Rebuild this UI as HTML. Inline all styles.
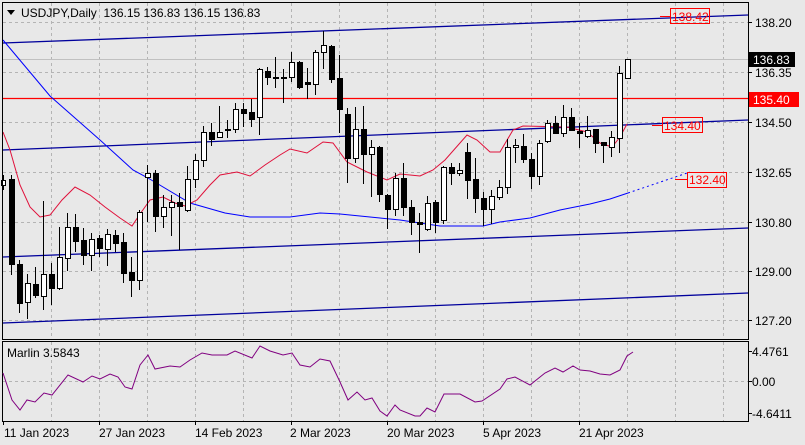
<!DOCTYPE html>
<html><head><meta charset="utf-8"><style>
html,body{margin:0;padding:0;background:#e8e8e8;}
svg{display:block;font-family:"Liberation Sans",sans-serif;}
</style></head><body>
<svg width="805" height="445" viewBox="0 0 805 445" xmlns="http://www.w3.org/2000/svg">
<rect width="805" height="445" fill="#e8e8e8"/>
<g stroke="#b4b4b4" stroke-width="1" stroke-dasharray="3,3" fill="none">
<path d="M3 22.5H748M3 72.5H748M3 122.5H748M3 172.5H748M3 222.5H748M3 271.5H748M3 320.5H748"/>
<path d="M51.5 3V339M99.5 3V339M147.5 3V339M195.5 3V339M243.5 3V339M291.5 3V339M339.5 3V339M387.5 3V339M435.5 3V339M483.5 3V339M531.5 3V339M579.5 3V339M627.5 3V339M675.5 3V339M723.5 3V339"/>
<path d="M51.5 342V421M99.5 342V421M147.5 342V421M195.5 342V421M243.5 342V421M291.5 342V421M339.5 342V421M387.5 342V421M435.5 342V421M483.5 342V421M531.5 342V421M579.5 342V421M627.5 342V421M675.5 342V421M723.5 342V421M3 381.5H748"/>
</g>
<path d="M3 59.5H748" stroke="#c0c0c0"/>
<g stroke="#00009c" stroke-width="1.3" fill="none">
<path d="M3 43L748 15"/>
<path d="M3 150L748 120"/>
<path d="M3 257L748 228"/>
<path d="M3 323L748 293"/>
</g>
<path d="M3 98.5H748" stroke="#ff0000" stroke-width="1.3"/>
<polyline fill="none" stroke="#0000ff" stroke-width="1" points="3,40 50,96 100,140 133,170 148,178 190,203 225,213 250,217 290,217 320,213 340,214 380,218 400,220 420,223 440,226 483,226 500,222 530,218 560,210 590,204 610,199 628,193"/>
<path d="M628 193L690 172" stroke="#0000ff" stroke-dasharray="2,3" fill="none"/>
<polyline fill="none" stroke="#e0103a" stroke-width="1" points="3,132 10,150 20,185 30,207 40,217 50,215 62,200 75,187 90,195 105,207 120,218 132,226 140,214 150,200 163,197 175,203 185,206 197,200 210,185 220,175 237,172 250,176 265,165 280,155 290,149 307,153 323,142 333,143 347,162 367,172 387,180 400,174 420,176 433,170 445,160 467,135 477,140 490,152 500,152 513,130 523,126 567,127 587,132 600,143 612,147 620,137 627,124"/>
<path stroke="#000" stroke-width="1" fill="none" d="M3.5 175V190M11.5 175V275M19.5 260V313M27.5 274V319M35.5 267V298M43.5 201V310M51.5 263V305M59.5 227V290M67.5 213V271M75.5 214V252M83.5 228V265M91.5 233V271M99.5 235V257M107.5 229V266M115.5 230V252M123.5 233V283M131.5 257V297M139.5 210V290M147.5 165V222M155.5 170V232M163.5 195V228M171.5 195V236M179.5 193V250M187.5 166V212M195.5 154V188M203.5 126V167M211.5 123V146M219.5 106V137M227.5 120V138M235.5 103V133M243.5 103V127M251.5 99V127M259.5 68V135M267.5 67V85M275.5 57V88M283.5 69V103M291.5 52V82M299.5 61V89M307.5 68V99M315.5 50V95M323.5 31V69M331.5 45V83M339.5 55V133M347.5 108V183M355.5 107V163M363.5 106V184M371.5 140V197M379.5 146V202M387.5 194V229M395.5 173V216M403.5 163V216M411.5 200V235M419.5 213V253M427.5 196V231M435.5 200V233M443.5 166V224M451.5 163V185M459.5 163V176M467.5 143V199M475.5 158V213M483.5 192V226M491.5 190V224M499.5 180V200M507.5 139V194M515.5 139V163M523.5 134V163M531.5 153V189M539.5 140V185M547.5 120V143M555.5 116V133M563.5 105V137M571.5 108V131M579.5 123V148M587.5 116V138M595.5 129V153M603.5 142V163M611.5 131V157M619.5 66V153M627.5 59V78"/>
<g stroke="#000" stroke-width="1">
<g fill="#fff">
<rect x="1.5" y="180.5" width="4" height="5"/>
<rect x="25.5" y="283.5" width="5" height="19"/>
<rect x="41.5" y="274.5" width="5" height="22"/>
<rect x="57.5" y="257.5" width="5" height="31"/>
<rect x="65.5" y="227.5" width="5" height="31"/>
<rect x="89.5" y="239.5" width="5" height="16"/>
<rect x="105.5" y="234.5" width="5" height="15"/>
<rect x="137.5" y="212.5" width="5" height="68"/>
<rect x="145.5" y="173.5" width="5" height="4"/>
<rect x="161.5" y="207.5" width="5" height="9"/>
<rect x="169.5" y="202.5" width="5" height="5"/>
<rect x="185.5" y="179.5" width="5" height="31"/>
<rect x="193.5" y="160.5" width="5" height="19"/>
<rect x="201.5" y="132.5" width="5" height="28"/>
<rect x="217.5" y="132.5" width="5" height="5"/>
<rect x="233.5" y="109.5" width="5" height="20"/>
<rect x="257.5" y="69.5" width="5" height="48"/>
<rect x="289.5" y="62.5" width="5" height="15"/>
<rect x="313.5" y="52.5" width="5" height="32"/>
<rect x="321.5" y="45.5" width="5" height="7"/>
<rect x="353.5" y="129.5" width="5" height="29"/>
<rect x="369.5" y="147.5" width="5" height="7"/>
<rect x="393.5" y="178.5" width="5" height="31"/>
<rect x="425.5" y="203.5" width="5" height="26"/>
<rect x="441.5" y="167.5" width="5" height="53"/>
<rect x="457.5" y="170.5" width="5" height="3"/>
<rect x="489.5" y="196.5" width="5" height="13"/>
<rect x="497.5" y="187.5" width="5" height="10"/>
<rect x="505.5" y="147.5" width="5" height="40"/>
<rect x="513.5" y="145.5" width="5" height="2"/>
<rect x="537.5" y="143.5" width="5" height="33"/>
<rect x="545.5" y="123.5" width="5" height="18"/>
<rect x="561.5" y="117.5" width="5" height="16"/>
<rect x="585.5" y="130.5" width="5" height="6"/>
<rect x="609.5" y="137.5" width="5" height="10"/>
<rect x="617.5" y="73.5" width="5" height="65"/>
<rect x="625.5" y="59.5" width="5" height="19"/>
</g>
<g fill="#000">
<rect x="9.5" y="179.5" width="5" height="85"/>
<rect x="17.5" y="264.5" width="5" height="39"/>
<rect x="33.5" y="284.5" width="5" height="11"/>
<rect x="49.5" y="274.5" width="5" height="14"/>
<rect x="73.5" y="227.5" width="5" height="14"/>
<rect x="81.5" y="240.5" width="5" height="15"/>
<rect x="97.5" y="238.5" width="5" height="10"/>
<rect x="113.5" y="235.5" width="5" height="8"/>
<rect x="121.5" y="242.5" width="5" height="31"/>
<rect x="129.5" y="272.5" width="5" height="8"/>
<rect x="153.5" y="173.5" width="5" height="43"/>
<rect x="177.5" y="202.5" width="5" height="4"/>
<rect x="209.5" y="132.5" width="5" height="7"/>
<rect x="225.5" y="129.5" width="5" height="1"/>
<rect x="241.5" y="109.5" width="5" height="4"/>
<rect x="249.5" y="112.5" width="5" height="7"/>
<rect x="265.5" y="71.5" width="5" height="6"/>
<rect x="273.5" y="77.5" width="5" height="1"/>
<rect x="281.5" y="77.5" width="5" height="1"/>
<rect x="297.5" y="62.5" width="5" height="25"/>
<rect x="305.5" y="82.5" width="5" height="2"/>
<rect x="329.5" y="46.5" width="5" height="33"/>
<rect x="337.5" y="78.5" width="5" height="31"/>
<rect x="345.5" y="114.5" width="5" height="44"/>
<rect x="361.5" y="129.5" width="5" height="25"/>
<rect x="377.5" y="147.5" width="5" height="47"/>
<rect x="385.5" y="195.5" width="5" height="14"/>
<rect x="401.5" y="178.5" width="5" height="29"/>
<rect x="409.5" y="207.5" width="5" height="15"/>
<rect x="417.5" y="222.5" width="5" height="2"/>
<rect x="433.5" y="202.5" width="5" height="20"/>
<rect x="449.5" y="167.5" width="5" height="6"/>
<rect x="465.5" y="152.5" width="5" height="28"/>
<rect x="473.5" y="179.5" width="5" height="19"/>
<rect x="481.5" y="198.5" width="5" height="11"/>
<rect x="521.5" y="146.5" width="5" height="13"/>
<rect x="529.5" y="159.5" width="5" height="17"/>
<rect x="553.5" y="123.5" width="5" height="10"/>
<rect x="569.5" y="117.5" width="5" height="13"/>
<rect x="577.5" y="131.5" width="5" height="2"/>
<rect x="593.5" y="129.5" width="5" height="14"/>
<rect x="601.5" y="142.5" width="5" height="3"/>
</g>
</g>
<g stroke="#ff0000" stroke-width="1" fill="none">
<path d="M660 16.5H670M652 125.5H662M675 179.5H687"/>
<rect x="670.5" y="8.5" width="39" height="15"/>
<rect x="662.5" y="117.5" width="40" height="15"/>
<rect x="687.5" y="172.5" width="39" height="15"/>
</g>
<g fill="#ff0000" font-size="12">
<text x="672" y="21">138.42</text>
<text x="664" y="130">134.40</text>
<text x="689" y="184">132.40</text>
</g>
<g stroke="#000" stroke-width="1" fill="none">
<path d="M2.5 2.5H748.5V339.5H2.5Z"/>
<path d="M2.5 341.5H748.5V421.5H2.5Z"/>
<path d="M748 22.5H752M748 72.5H752M748 122.5H752M748 172.5H752M748 222.5H752M748 271.5H752M748 320.5H752M748 351.5H752M748 381.5H752M748 413.5H752"/>
<path d="M3.5 421V425M99.5 421V425M195.5 421V425M291.5 421V425M387.5 421V425M483.5 421V425M579.5 421V425"/>
</g>
<polyline fill="none" stroke="#800080" stroke-width="1" points="3,373 12,400 20,410 27,400 35,402 44,393 52,395 68,375 83,382 92,376 100,379 110,374 118,377 125,387 132,389 140,365 148,355 155,369 170,366 180,367 190,360 202,353 212,355 227,355 235,351 252,358 260,346 270,351 283,355 292,353 300,365 310,367 320,359 330,361 340,382 348,400 357,392 365,400 372,398 380,411 387,416 395,405 400,410 415,416 420,416 427,408 435,412 444,394 460,394 475,402 482,401 500,389 507,379 515,377 530,385 545,373 555,368 563,372 573,366 580,370 590,371 600,374 610,375 620,370 627,356 633,352"/>
<path d="M7 10H15L11 15Z" fill="#000"/>
<g font-size="12" fill="#000">
<text x="21" y="17">USDJPY,Daily&#160;&#160;136.15 136.83 136.15 136.83</text>
<text x="7" y="357">Marlin 3.5843</text>
<text x="755" y="27">138.20</text>
<text x="755" y="77">136.35</text>
<text x="755" y="127">134.50</text>
<text x="755" y="177">132.65</text>
<text x="755" y="227">130.80</text>
<text x="755" y="276">129.00</text>
<text x="755" y="325">127.20</text>
<text x="752" y="356">4.4761</text>
<text x="752" y="386">0.00</text>
<text x="752" y="418">-4.6411</text>
<text x="4" y="437">11 Jan 2023</text>
<text x="99" y="437">27 Jan 2023</text>
<text x="195" y="437">14 Feb 2023</text>
<text x="290" y="437">2 Mar 2023</text>
<text x="387" y="437">20 Mar 2023</text>
<text x="483" y="437">5 Apr 2023</text>
<text x="579" y="437">21 Apr 2023</text>
</g>
<rect x="749" y="52" width="46" height="15" fill="#000"/>
<text x="753" y="64" font-size="12" fill="#fff">136.83</text>
<rect x="749" y="92" width="50" height="15" fill="#ff0000"/>
<text x="753" y="104" font-size="12" fill="#fff">135.40</text>
</svg>
</body></html>
